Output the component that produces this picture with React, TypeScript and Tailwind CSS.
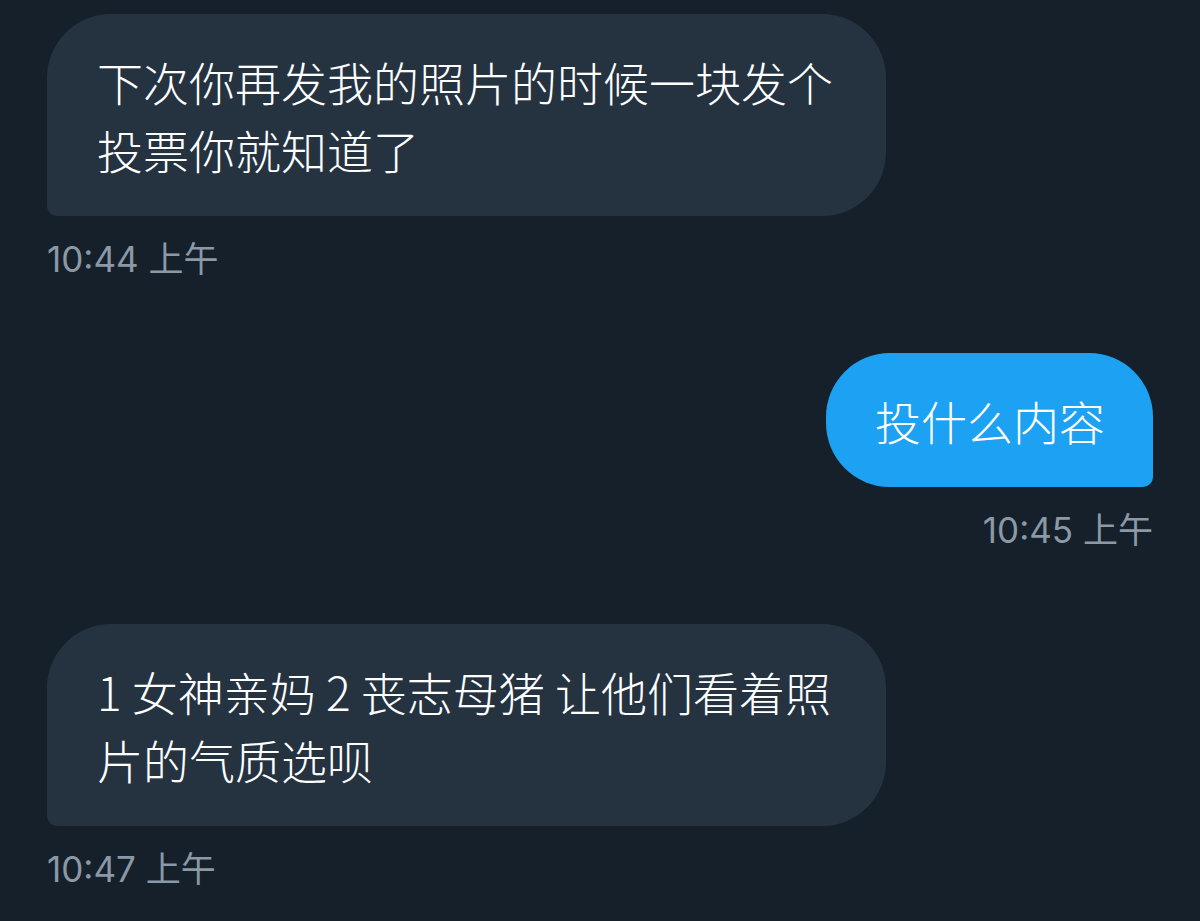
import React from "react";

type Message = {
  id: number;
  text: string;
  time: string;
  mine: boolean;
};

const messages: Message[] = [
  {
    id: 1,
    text: "下次你再发我的照片的时候一块发个投票你就知道了",
    time: "10:44 上午",
    mine: false,
  },
  { id: 2, text: "投什么内容", time: "10:45 上午", mine: true },
  {
    id: 3,
    text: "1 女神亲妈 2 丧志母猪 让他们看着照片的气质选呗",
    time: "10:47 上午",
    mine: false,
  },
];

const bodyFont = {
  fontFamily: '"Noto Sans CJK SC", Inter, sans-serif',
};

const timeFont = {
  fontFamily: 'Inter, "Noto Sans CJK SC", sans-serif',
};

function Bubble({ msg }: { msg: Message }) {
  return (
    <div className={`flex flex-col ${msg.mine ? "items-end" : "items-start"}`}>
      <div
        className={
          msg.mine
            ? "bg-[#1da1f2] text-white font-light rounded-[64px] rounded-br-[10px] pl-[49px] pr-[48px] py-[33px] text-[46px] leading-[68px] max-w-[839px]"
            : "bg-[#253341] text-white font-light rounded-[64px] rounded-bl-[10px] pl-[50px] pr-[46px] py-[33px] text-[46px] leading-[68px] max-w-[839px]"
        }
      >
        {msg.text}
      </div>
      <div
        className="mt-[22px] text-[35px] leading-[42px] text-[#8b98a5]"
        style={timeFont}
      >
        {msg.time}
      </div>
    </div>
  );
}

export default function App() {
  return (
    <div
      className="min-h-screen bg-[#15202b] px-[47px] pt-[14px] flex flex-col gap-[73px]"
      style={bodyFont}
    >
      {messages.map((m) => (
        <Bubble key={m.id} msg={m} />
      ))}
    </div>
  );
}
